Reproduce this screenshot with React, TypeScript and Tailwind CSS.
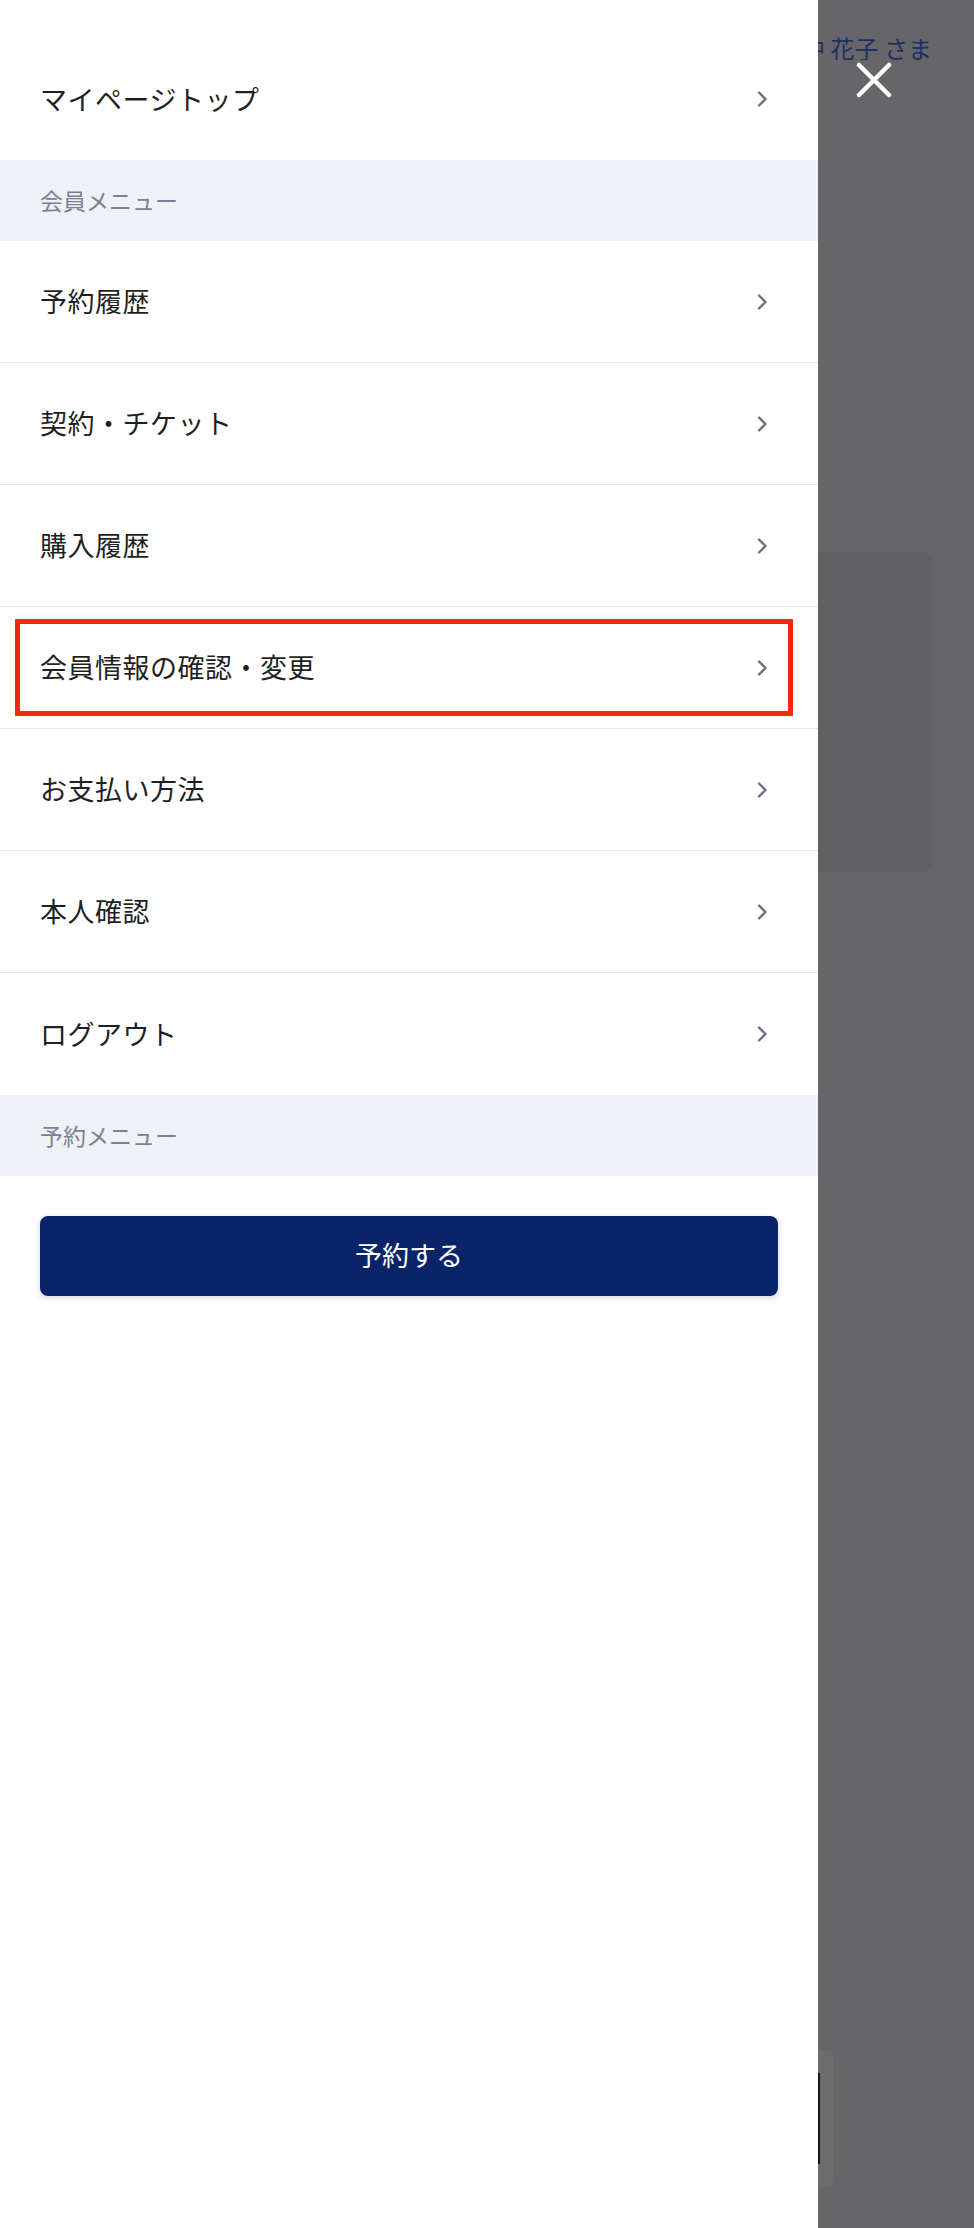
import React from "react";

const FONT = { fontFamily: '"Noto Sans CJK JP", "Noto Sans", sans-serif' };

function Chevron() {
  return (
    <svg width="11" height="16" viewBox="0 0 11 16" fill="none" aria-hidden="true">
      <polyline
        points="2,1.5 8.5,8 2,14.5"
        stroke="#6b7080"
        strokeWidth="2.4"
        strokeLinecap="round"
        strokeLinejoin="round"
      />
    </svg>
  );
}

function Row({ label, highlight }: { label: string; highlight?: boolean }) {
  return (
    <div className="relative h-[122px] flex items-center justify-between pl-[40px] pr-[50px]">
      <span className="text-[27px] leading-none text-[#1f1f1f] tracking-[0.5px] pb-[2px]">{label}</span>
      <Chevron />
      {highlight && (
        <div className="absolute left-[15px] right-[25px] top-[12px] bottom-[12px] border-[5px] border-[#f0280c] pointer-events-none" />
      )}
    </div>
  );
}

function SectionHeader({ label }: { label: string }) {
  return (
    <div className="h-[81px] bg-[#eef1f6] flex items-center pl-[40px]">
      <span className="text-[23px] leading-none text-[#7a8093]">{label}</span>
    </div>
  );
}

export default function App() {
  const memberItems = [
    "予約履歴",
    "契約・チケット",
    "購入履歴",
    "会員情報の確認・変更",
    "お支払い方法",
    "本人確認",
    "ログアウト",
  ];
  return (
    <div className="relative w-[974px] h-[2228px] overflow-hidden bg-[#666668] flex" style={FONT}>
      <nav className="w-[818px] shrink-0 h-full bg-white flex flex-col pt-[38px]">
        <Row label="マイページトップ" />
        <SectionHeader label="会員メニュー" />
        <div className="flex flex-col divide-y divide-[#e6e8ec]">
          {memberItems.map((l) => (
            <Row key={l} label={l} highlight={l === "会員情報の確認・変更"} />
          ))}
        </div>
        <SectionHeader label="予約メニュー" />
        <div className="px-[40px] pt-[40px]">
          <button className="w-full h-[80px] rounded-[8px] bg-[#0a246a] text-white text-[27px] leading-none pb-[3px] shadow-[0_2px_6px_rgba(10,36,106,0.18)]">
            予約する
          </button>
        </div>
      </nav>

      <div className="flex-1 min-w-0 h-full flex flex-col">
        <div className="flex justify-end overflow-hidden pr-[42px] pt-[36px]">
          <span className="whitespace-nowrap text-[24px] leading-none text-[#1e2e66]">田中 花子 さま</span>
        </div>
        <div className="mt-[492px] mr-[42px] h-[320px] rounded-r-[9px] bg-[#616163]" />
        <div className="mt-auto mb-[41px] w-[15px] h-[137px] rounded-r-[6px] bg-[#6c6c6d] flex items-center">
          <div className="w-[2px] h-[91px] bg-[#151515]" />
        </div>
      </div>

      <button
        aria-label="閉じる"
        className="absolute left-[856px] top-[62px] w-[36px] h-[36px] flex items-center justify-center"
      >
        <svg width="36" height="36" viewBox="0 0 36 36" fill="none">
          <line x1="3" y1="3" x2="33" y2="33" stroke="white" strokeWidth="4.5" strokeLinecap="round" />
          <line x1="33" y1="3" x2="3" y2="33" stroke="white" strokeWidth="4.5" strokeLinecap="round" />
        </svg>
      </button>
    </div>
  );
}
